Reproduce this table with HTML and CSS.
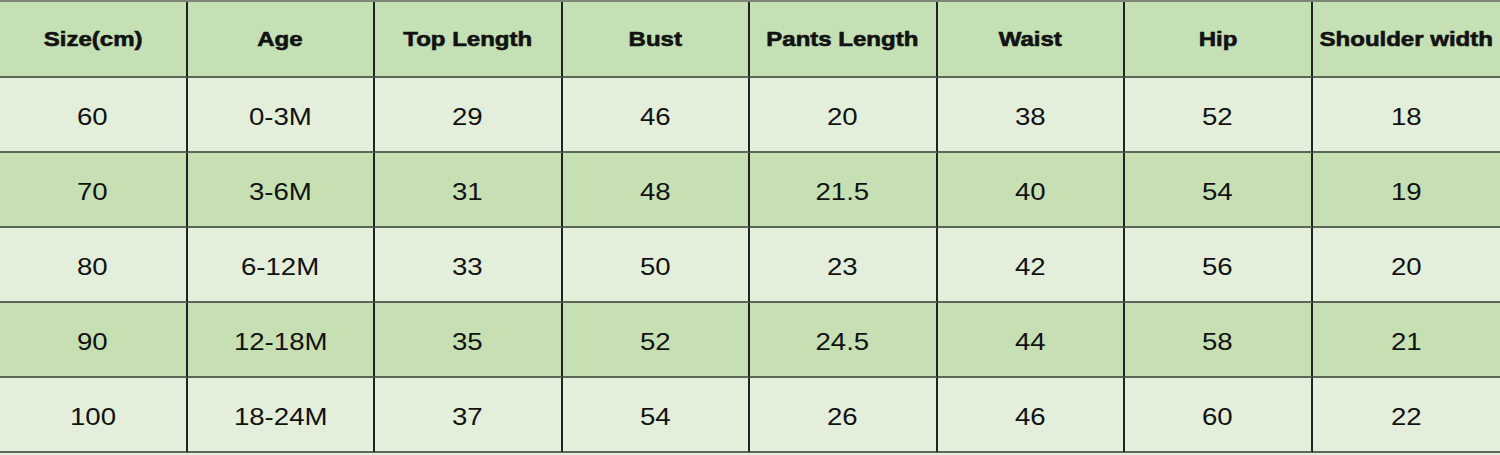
FILE: index.html
```html
<!DOCTYPE html>
<html>
<head>
<meta charset="utf-8">
<link rel="stylesheet" href="styles.css">
</head>
<body>
<table class="size-table">
  <colgroup>
    <col class="col"><col class="col"><col class="col"><col class="col">
    <col class="col"><col class="col"><col class="col"><col class="col">
  </colgroup>
  <thead>
    <tr class="head">
      <th><span class="t">Size(cm)</span></th>
      <th><span class="t">Age</span></th>
      <th><span class="t">Top Length</span></th>
      <th><span class="t">Bust</span></th>
      <th><span class="t">Pants Length</span></th>
      <th><span class="t">Waist</span></th>
      <th><span class="t">Hip</span></th>
      <th><span class="t">Shoulder width</span></th>
    </tr>
  </thead>
  <tbody>
    <tr class="light">
      <td><span class="t">60</span></td><td><span class="t">0-3M</span></td><td><span class="t">29</span></td><td><span class="t">46</span></td>
      <td><span class="t">20</span></td><td><span class="t">38</span></td><td><span class="t">52</span></td><td><span class="t">18</span></td>
    </tr>
    <tr class="dark">
      <td><span class="t">70</span></td><td><span class="t">3-6M</span></td><td><span class="t">31</span></td><td><span class="t">48</span></td>
      <td><span class="t">21.5</span></td><td><span class="t">40</span></td><td><span class="t">54</span></td><td><span class="t">19</span></td>
    </tr>
    <tr class="light">
      <td><span class="t">80</span></td><td><span class="t">6-12M</span></td><td><span class="t">33</span></td><td><span class="t">50</span></td>
      <td><span class="t">23</span></td><td><span class="t">42</span></td><td><span class="t">56</span></td><td><span class="t">20</span></td>
    </tr>
    <tr class="dark">
      <td><span class="t">90</span></td><td><span class="t">12-18M</span></td><td><span class="t">35</span></td><td><span class="t">52</span></td>
      <td><span class="t">24.5</span></td><td><span class="t">44</span></td><td><span class="t">58</span></td><td><span class="t">21</span></td>
    </tr>
    <tr class="light">
      <td><span class="t">100</span></td><td><span class="t">18-24M</span></td><td><span class="t">37</span></td><td><span class="t">54</span></td>
      <td><span class="t">26</span></td><td><span class="t">46</span></td><td><span class="t">60</span></td><td><span class="t">22</span></td>
    </tr>
  </tbody>
</table>
</body>
</html>
```

FILE: styles.css
```css
html, body {
  margin: 0;
  padding: 0;
  background: #e4efdc;
}

.size-table {
  width: 1500px;
  table-layout: fixed;
  border-collapse: separate;
  border-spacing: 0;
  border-top: 2px solid #7d8679;
  font-family: "Liberation Sans", Arial, sans-serif;
  color: #121212;
}

.col {
  width: 187.5px;
}

.size-table th,
.size-table td {
  padding: 0;
  text-align: center;
  vertical-align: middle;
  border-bottom: 2px solid #5d6759;
  border-right: 2px solid #222222;
  white-space: nowrap;
  overflow: visible;
}

.size-table th:last-child,
.size-table td:last-child {
  border-right: none;
}

.head th {
  height: 74px;
  background: #c5e0b4;
  font-size: 20px;
  font-weight: bold;
  -webkit-text-stroke: 0.6px #121212;
}

.size-table td {
  height: 68px;
  padding-top: 5px;
  font-size: 24px;
  font-weight: normal;
}

.light td {
  background: #e3efda;
}

.dark td {
  background: #c6e0b4;
}

.t {
  display: inline-block;
  transform: scaleX(1.15);
}

.head .t {
  transform: scaleX(1.2);
}
```
